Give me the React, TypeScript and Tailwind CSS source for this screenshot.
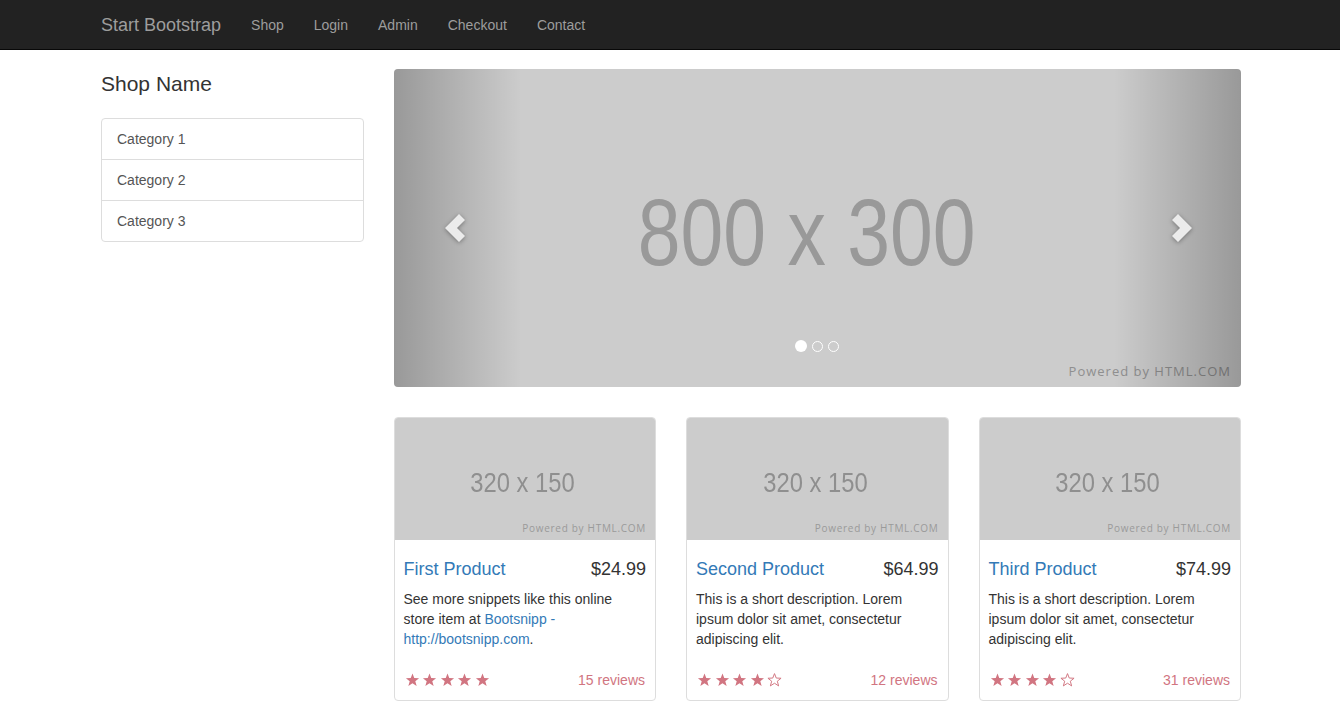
import React from 'react';

const navLinks = ['Shop', 'Login', 'Admin', 'Checkout', 'Contact'];
const categories = ['Category 1', 'Category 2', 'Category 3'];

const products = [
  {
    name: 'First Product',
    price: '$24.99',
    reviews: 15,
    stars: 5,
    desc: (
      <>
        See more snippets like this online store item at{' '}
        <a className="text-[#337ab7]" href="#">
          Bootsnipp - http://bootsnipp.com
        </a>
        .
      </>
    ),
  },
  {
    name: 'Second Product',
    price: '$64.99',
    reviews: 12,
    stars: 4,
    desc: <>This is a short description. Lorem ipsum dolor sit amet, consectetur adipiscing elit.</>,
  },
  {
    name: 'Third Product',
    price: '$74.99',
    reviews: 31,
    stars: 4,
    desc: <>This is a short description. Lorem ipsum dolor sit amet, consectetur adipiscing elit.</>,
  },
];

function Star({ filled }: { filled: boolean }) {
  return (
    <svg width="15" height="14" viewBox="0 0 24 23" className="block">
      <polygon
        points="12,1 14.9,8.3 22.8,8.6 16.6,13.5 18.8,21.2 12,16.8 5.2,21.2 7.4,13.5 1.2,8.6 9.1,8.3"
        fill={filled ? '#d17581' : 'none'}
        stroke="#d17581"
        strokeWidth={filled ? 0 : 1.6}
      />
    </svg>
  );
}

function Chevron({ dir }: { dir: 'left' | 'right' }) {
  const pts =
    dir === 'left'
      ? '14,0 20,6 12,14 20,22 14,28 0,14'
      : '6,0 20,14 6,28 0,22 8,14 0,6';
  return (
    <svg width="20" height="28" viewBox="0 0 20 28" className="drop-shadow-[0_1px_2px_rgba(0,0,0,0.35)]">
      <polygon points={pts} fill="#ebebeb" />
    </svg>
  );
}

function PoweredBy({ small }: { small?: boolean }) {
  return (
    <span
      className={
        small
          ? "absolute right-[9px] bottom-[2px] text-[10px] tracking-[0.7px] text-[#9a9a9a] font-['Open_Sans',sans-serif]"
          : "absolute right-[10px] bottom-[6px] text-[13px] tracking-[1px] text-[#8f8f8f] font-['Open_Sans',sans-serif]"
      }
    >
      Powered by HTML.COM
    </span>
  );
}

export default function App() {
  return (
    <div className="min-h-screen bg-white font-['Liberation_Sans',Arial,sans-serif] text-[14px] leading-[20px] text-[#333]">
      {/* Navbar */}
      <nav className="h-[50px] bg-[#222] border-b border-[#080808]">
        <div className="w-[1170px] mx-auto flex items-center h-[50px] pl-[1px]">
          <a href="#" className="px-[15px] text-[18px] leading-[20px] text-[#9d9d9d]">
            Start Bootstrap
          </a>
          {navLinks.map((l) => (
            <a key={l} href="#" className="px-[15px] text-[14px] text-[#9d9d9d]">
              {l}
            </a>
          ))}
        </div>
      </nav>

      {/* Main */}
      <div className="w-[1170px] mx-auto pl-[16px] pr-[14px] pt-[19px]">
        <div className="flex -mx-[15px]">
          {/* Sidebar */}
          <div className="w-[292.5px] px-[15px]">
            <p className="text-[21px] leading-[29px] mb-[20px] font-light">Shop Name</p>
            <div className="border border-[#ddd] rounded-[4px]">
              {categories.map((c, i) => (
                <a
                  key={c}
                  href="#"
                  className={
                    'block px-[15px] py-[10px] text-[#555] ' + (i < categories.length - 1 ? 'border-b border-[#ddd]' : '')
                  }
                >
                  {c}
                </a>
              ))}
            </div>
          </div>

          {/* Content */}
          <div className="w-[877.5px] px-[15px]">
            {/* Carousel */}
            <div className="relative h-[318px] bg-[#ccc] rounded-[4px] overflow-hidden mb-[30px]">
              <div className="absolute inset-0 flex items-center justify-center">
                <span className="text-[95px] leading-none text-[#999] scale-x-[0.81] mt-[8px] mr-[22px]">800 x 300</span>
              </div>
              <PoweredBy />
              <div className="absolute left-0 top-0 bottom-0 w-[15%] bg-gradient-to-r from-[rgba(0,0,0,0.25)] to-transparent flex items-center justify-center">
                <div className="ml-[-5px]">
                  <Chevron dir="left" />
                </div>
              </div>
              <div className="absolute right-0 top-0 bottom-0 w-[15%] bg-gradient-to-l from-[rgba(0,0,0,0.25)] to-transparent flex items-center justify-center">
                <div className="ml-[10px]">
                  <Chevron dir="right" />
                </div>
              </div>
              <div className="absolute bottom-[35px] left-0 right-0 flex items-center justify-center gap-[5px]">
                <span className="w-[12px] h-[12px] rounded-full bg-white" />
                <span className="w-[11px] h-[11px] rounded-full border border-white" />
                <span className="w-[11px] h-[11px] rounded-full border border-white" />
              </div>
            </div>

            {/* Products */}
            <div className="grid grid-cols-3 gap-[30px]">
              {products.map((p) => (
                <div key={p.name} className="border border-[#ddd] rounded-[4px] overflow-hidden mb-[20px]">
                  <div className="relative h-[122px] bg-[#ccc] flex items-center justify-center">
                    <span className="text-[28px] leading-none text-[#8f8f8f] scale-x-[0.85] mt-[8px] mr-[4px]">320 x 150</span>
                    <PoweredBy small />
                  </div>
                  <div className="h-[130px] overflow-hidden p-[9px]">
                    <div className="flex justify-between mt-[10px] mb-[10px] text-[18px] leading-[20px]">
                      <a href="#" className="text-[#337ab7]">
                        {p.name}
                      </a>
                      <span>{p.price}</span>
                    </div>
                    <p>{p.desc}</p>
                  </div>
                  <div className="flex justify-between items-center px-[10px] h-[20px] mb-[10px] text-[#d17581]">
                    <div className="flex gap-[2.5px]">
                      {[0, 1, 2, 3, 4].map((i) => (
                        <Star key={i} filled={i < p.stars} />
                      ))}
                    </div>
                    <span>{p.reviews} reviews</span>
                  </div>
                </div>
              ))}
            </div>
          </div>
        </div>
      </div>
    </div>
  );
}
